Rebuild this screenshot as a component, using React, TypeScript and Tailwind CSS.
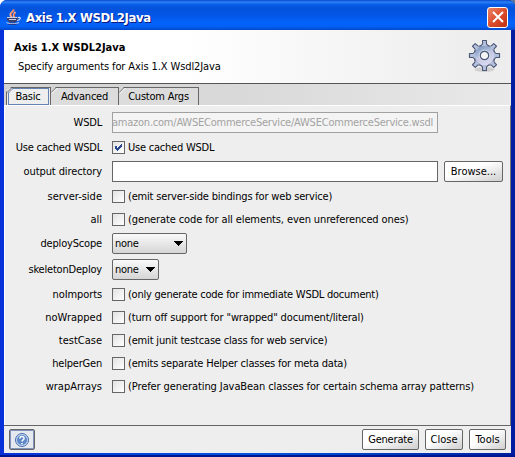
import type { ReactNode } from "react";

function Check({ checked }: { checked?: boolean }) {
  return (
    <span className="flex h-[13px] w-[13px] shrink-0 items-center justify-center border border-[#666] bg-gradient-to-br from-[#e2e2e2] to-white">
      {checked && (
        <svg width="9" height="9" viewBox="0 0 9 9" shapeRendering="crispEdges">
          <path d="M1 3h2v2h1v-1h1v-1h1v-1h1v-1h1v3h-1v1h-1v1h-1v1h-1v1h-1v-1h-1v-1h-1z" fill="#27468f" />
        </svg>
      )}
    </span>
  );
}

function Row({ label, tracking, height, children }: { label: string; tracking: string; height: string; children: ReactNode }) {
  return (
    <div className={`flex items-center ${height}`}>
      <span className={`w-[98px] shrink-0 text-right ${tracking}`}>{label}</span>
      <div className="ml-[10px] flex items-center">{children}</div>
    </div>
  );
}

function CheckRow({ label, text, lt, tt, height = "h-[23px]", checked }: { label: string; text: string; lt: string; tt: string; height?: string; checked?: boolean }) {
  return (
    <Row label={label} tracking={lt} height={height}>
      <Check checked={checked} />
      <span className={`ml-[3px] ${tt}`}>{text}</span>
    </Row>
  );
}

function Button({ children, width }: { children: string; width: string }) {
  return (
    <button className={`flex h-[21px] shrink-0 items-center justify-center rounded-[2px] border border-[#666] bg-gradient-to-br from-white from-40% to-[#cfcfcf] ${width}`}>
      {children}
    </button>
  );
}

function Select({ width }: { width: string }) {
  return (
    <button className={`flex h-[21px] items-center justify-between rounded-[2px] border border-[#666] bg-gradient-to-b from-[#fafafa] to-[#d5d5d5] pr-[3px] pl-[2px] ${width}`}>
      <span className="tracking-[-0.3px]">none</span>
      <svg width="9" height="5" viewBox="0 0 9 5" shapeRendering="crispEdges">
        <path d="M0 0h9v1h-1v1h-1v1h-1v1h-1v1h-1v-1h-1v-1h-1v-1h-1v-1h-1z" fill="#000" />
      </svg>
    </button>
  );
}

function Tab({ label, width, active }: { label: string; width: string; active?: boolean }) {
  return (
    <div className={`relative flex h-[18px] justify-center border-t border-r border-[#666] pt-px tracking-[-0.22px] [clip-path:polygon(5px_0,100%_0,100%_100%,0_100%,0_5px)] ${active ? "border-l bg-[#eee] pr-px" : "bg-[#dcdcdc]"} ${width}`}>
      {active && (
        <span className="absolute inset-x-[1px] top-0 bottom-0 border border-[#6482b2] [clip-path:polygon(5px_0,100%_0,100%_100%,0_100%,0_5px)]" />
      )}
      <span>{label}</span>
      <svg className="absolute -top-px left-0" width="7" height="7" viewBox="0 0 7 7">
        <path d="M0 5.5 5.5 0" stroke="#555" />
        <path d="M1 6.5 6.5 1" stroke={active ? "#6482b2" : "#fff"} strokeWidth=".8" />
      </svg>
    </div>
  );
}

function JavaIcon() {
  return (
    <svg width="16" height="16" viewBox="0 0 16 16" fill="none">
      <path d="M7.5 0.5C8 3 3.5 3.500 4.500 6l1 2M9.500 3C7 4.500 9 6 7.500 8" stroke="#ffb590" strokeWidth="2" />
      <path d="M7.300 .5C7.500 3.500 4 4 6 7M8.500 4.500V7" stroke="#e3502e" />
      <path d="M1 8h11v2.500L9.500 13.500h-6L1 11z" fill="#39406d" />
      <path d="M1 8.500h10.500M3 10.500h7" stroke="#c9cde6" />
      <path d="M12 8.500c3.500-1 3 2.500-1 3" stroke="#d5dcf7" strokeWidth="1.200" />
      <path d="M0.500 13.500c2 1.500 10 1.500 12.500 0" stroke="#d5dcf7" />
      <path d="M2.500 15.300h8" stroke="#29316b" />
    </svg>
  );
}

function Gear() {
  const angles = [0, 45, 90, 135, 180, 225, 270, 315];
  return (
    <svg width="33" height="34" viewBox="-16.5 -16.5 33 34">
      <defs>
        <linearGradient id="steel" x1="0" y1="0" x2=".5" y2="1">
          <stop stopColor="#7088b5" />
          <stop offset=".5" stopColor="#aebfdd" />
          <stop offset=".55" stopColor="#c3c4e2" />
          <stop offset="1" stopColor="#d9d9f0" />
        </linearGradient>
      </defs>
      <ellipse cx="0" cy="14" rx="10" ry="2.500" fill="#d0d0d0" />
      {angles.map((a) => (
        <path key={a} transform={`rotate(${a})`} d="M-4-9-1.900-11.500V-15H1.900V-11.500L4-9" fill="#bcc6df" stroke="#4c5878" strokeWidth="1.200" strokeLinejoin="round" />
      ))}
      <circle r="10.500" fill="url(#steel)" stroke="#4c5878" strokeWidth="1.200" />
      {angles.map((a) => (
        <path key={a} transform={`rotate(${a})`} d="M-3.200-9.500-1.300-11.500V-14.300H1.300V-11.500L3.200-9.500z" fill="#b5c1dc" />
      ))}
      <circle r="5.300" fill="none" stroke="#d9e1f0" strokeWidth="1" />
      <circle r="4.200" fill="#f5f5f5" stroke="#4c5878" strokeWidth="1.200" />
    </svg>
  );
}

export default function App() {
  return (
    <div className="h-[457px] w-[515px] overflow-hidden bg-gradient-to-r from-white from-50% to-[#60769c] to-50% font-['DejaVu_Sans_Condensed','DejaVu_Sans',sans-serif] text-[11px] leading-[15px] whitespace-nowrap text-black">
      <div className="flex h-full flex-col rounded-t-[7px] bg-gradient-to-r from-[#0831d9] via-[#0855dd] via-50% to-[#001da0] px-1 pb-1 shadow-[inset_0_-2px_#001590]">
        <header className="-mx-1 flex h-[30px] shrink-0 items-center justify-between rounded-t-[7px] bg-[linear-gradient(#0a48cf_0%,#2b82f5_7%,#0a5de8_15%,#0453dc_26%,#0355e5_50%,#0363fb_75%,#0360f5_88%,#0349ca_100%)] pt-1 pr-[7px] pl-[6px]">
          <div className="flex items-center gap-[4px]">
            <JavaIcon />
            <h1 className="text-[13px] font-bold tracking-[-0.38px] text-white [text-shadow:1px_1px_#0a1883]">Axis 1.X WSDL2Java</h1>
          </div>
          <button className="flex h-[21px] w-[21px] items-center justify-center rounded-[3px] border border-white bg-gradient-to-br from-[#e98466] via-[#dc4d2c] to-[#bd300c]">
            <svg width="12" height="12" viewBox="0 0 12 12">
              <path d="M1 1l10 10M11 1 1 11" stroke="#fff" strokeWidth="2" />
            </svg>
          </button>
        </header>

        <section className="flex h-[54px] shrink-0 justify-between border-b border-[#555] bg-gradient-to-r from-white from-35% to-[#ededed] to-95% pr-[10px] pl-[10px]">
          <div>
            <h2 className="mt-[10px] text-[11px] font-bold">Axis 1.X WSDL2Java</h2>
            <p className="mt-[4px] ml-[4px] tracking-[-0.1px]">Specify arguments for Axis 1.X Wsdl2Java</p>
          </div>
          <div className="mt-[9px]"><Gear /></div>
        </section>

        <nav className="flex h-[21px] shrink-0 items-end bg-gradient-to-r from-[#d2d2d2] via-[#dadada] to-[#e9e9e9] pl-[2px]">
          <Tab label="Basic" width="w-[45px]" active />
          <Tab label="Advanced" width="w-[68px]" />
          <Tab label="Custom Args" width="w-[80px]" />
        </nav>

        <main className="h-[320px] shrink-0 border-t border-r border-l border-t-white border-r-[#777] border-l-white bg-[#eee] pt-[4px]">
          <div className="-ml-px">
            <Row label="WSDL" tracking="tracking-[-0.2px]" height="h-[25px]">
              <div className="flex h-[21px] w-[326px] items-center justify-end border border-[#a0a0a0] bg-[#f4f4f4] pr-[4px] text-[#a3a3a3]">
                <span className="tracking-[-0.22px]">amazon.com/AWSECommerceService/AWSECommerceService.wsdl</span>
              </div>
            </Row>
            <CheckRow label="Use cached WSDL" text="Use cached WSDL" lt="tracking-[-0.22px]" tt="tracking-[-0.22px]" height="h-[25px]" checked />
            <Row label="output directory" tracking="tracking-[-0.1px]" height="h-[23px]">
              <input aria-label="output directory" className="h-[21px] w-[326px] border border-[#666] bg-white" />
              <div className="ml-[6px] flex"><Button width="w-[59px]">Browse...</Button></div>
            </Row>
            <div className="h-[2px]" />
            <CheckRow label="server-side" text="(emit server-side bindings for web service)" lt="tracking-normal" tt="tracking-[-0.18px]" />
            <CheckRow label="all" text="(generate code for all elements, even unreferenced ones)" lt="tracking-normal" tt="tracking-[-0.11px]" />
            <Row label="deployScope" tracking="tracking-[-0.18px]" height="h-[25px]"><Select width="w-[75px]" /></Row>
            <Row label="skeletonDeploy" tracking="tracking-[-0.2px]" height="h-[27px]"><Select width="w-[47px]" /></Row>
            <CheckRow label="noImports" text="(only generate code for immediate WSDL document)" lt="tracking-[-0.1px]" tt="tracking-[-0.24px]" />
            <CheckRow label="noWrapped" text={'(turn off support for "wrapped" document/literal)'} lt="tracking-normal" tt="tracking-[-0.13px]" />
            <CheckRow label="testCase" text="(emit junit testcase class for web service)" lt="tracking-normal" tt="tracking-[-0.17px]" />
            <CheckRow label="helperGen" text="(emits separate Helper classes for meta data)" lt="tracking-[-0.2px]" tt="tracking-[-0.2px]" />
            <CheckRow label="wrapArrays" text="(Prefer generating JavaBean classes for certain schema array patterns)" lt="tracking-normal" tt="tracking-[-0.09px]" />
          </div>
        </main>

        <footer className="flex h-[28px] shrink-0 items-center justify-between border-t border-[#666] bg-[#eee] pr-[5px] pl-[5px]">
          <button className="flex h-[21px] w-[26px] items-center justify-center rounded-[2px] border border-[#666] bg-[#e5e8ef] shadow-[inset_0_0_0_1px_#8093bb]">
            <svg width="16" height="16" viewBox="0 0 16 16" fill="none">
              <circle cx="8" cy="8" r="6.5" fill="#c6d7f0" stroke="#466eae" />
              <circle cx="8" cy="8" r="5" fill="#5e87c5" />
              <path d="M5.800 6.500c0-3 4.500-2.500 4.300 0C10 8 8 7.800 8 9.600M8 11v1.300" stroke="#fff" strokeWidth="1.5" />
            </svg>
          </button>
          <div className="flex gap-[6px]">
            <Button width="w-[57px] tracking-[-0.2px]">Generate</Button>
            <Button width="w-[38px]">Close</Button>
            <Button width="w-[37px]">Tools</Button>
          </div>
        </footer>
      </div>
    </div>
  );
}
